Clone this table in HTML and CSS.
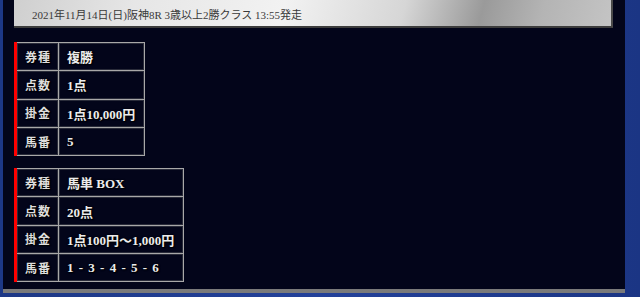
FILE: index.html
```html
<!DOCTYPE html>
<html lang="ja">
<head>
<meta charset="utf-8">
<link rel="stylesheet" href="styles.css">
</head>
<body>
<div class="frame">
  <div class="panel">
    <div class="header">2021年11月14日(日)阪神8R 3歳以上2勝クラス 13:55発走</div>
    <table class="bet">
      <tr><th>券種</th><td>複勝</td></tr>
      <tr><th>点数</th><td>1点</td></tr>
      <tr><th>掛金</th><td>1点10,000円</td></tr>
      <tr><th>馬番</th><td>5</td></tr>
    </table>
    <table class="bet">
      <tr><th>券種</th><td>馬単 BOX</td></tr>
      <tr><th>点数</th><td>20点</td></tr>
      <tr><th>掛金</th><td>1点100円～1,000円</td></tr>
      <tr><th>馬番</th><td class="nums">1 - 3 - 4 - 5 - 6</td></tr>
    </table>
  </div>
</div>
</body>
</html>
```

FILE: styles.css
```css
html, body {
  margin: 0;
  padding: 0;
}
body {
  width: 640px;
  height: 297px;
  overflow: hidden;
  background: linear-gradient(90deg, #1d3886 0%, #23419a 50%, #1b3584 100%);
  font-family: "Liberation Serif", "Noto Sans CJK JP", serif;
}
.frame {
  padding-left: 3px;
  width: 622px;
}
.panel {
  background: #03051a;
  height: 289px;
  border-bottom: 4px solid #8a8a8a;
  border-image: linear-gradient(180deg, #5a5a5a 0%, #c8c8c8 50%, #7a7a7a 100%) 1;
  border-left: 0; border-right: 0; border-top: 0;
  padding-left: 11px;
  box-sizing: content-box;
  overflow: hidden;
}
.header {
  border-right: 2px solid #4a4a4a;
  border-bottom: 2px solid #3c3c3c;
  background: linear-gradient(105deg, #cfcfcf 0%, #e6e6e6 20%, #f2f2f2 45%, #d6d6d6 65%, #9a9a9a 78%, #b4b4b4 88%, #c4c4c4 100%);
  font-size: 11px;
  color: #3a3a3a;
  padding-left: 18px;
  box-sizing: border-box;
  width: 599px;
  height: 28px;
  display: flex;
  align-items: center;
  padding-top: 2px;
}
.bet {
  border-collapse: collapse;
  border-left: 3px solid #ff0000;
  margin-top: 14px;
  font-size: 13px;
  font-weight: bold;
  color: #ececec;
  text-shadow: 0 0 2px #000, 1px 1px 1px #000;
}
.bet + .bet {
  margin-top: 12px;
}
.bet th, .bet td {
  border: 1px solid #a8a8a8;
  box-shadow: inset 0 0 0 1px #2a2c3a;
  height: 27.3px;
  padding: 0 8px;
  white-space: nowrap;
}
.bet th {
  width: 25px;
  text-align: center;
  font-size: 12px;
  letter-spacing: 1px;
  color: #dedede;
  padding: 0 7px 0 8px;
}
.bet td {
  text-align: left;
  padding: 0 9px 0 8px;
}
.bet td.nums {
  word-spacing: 2px;
}
```
